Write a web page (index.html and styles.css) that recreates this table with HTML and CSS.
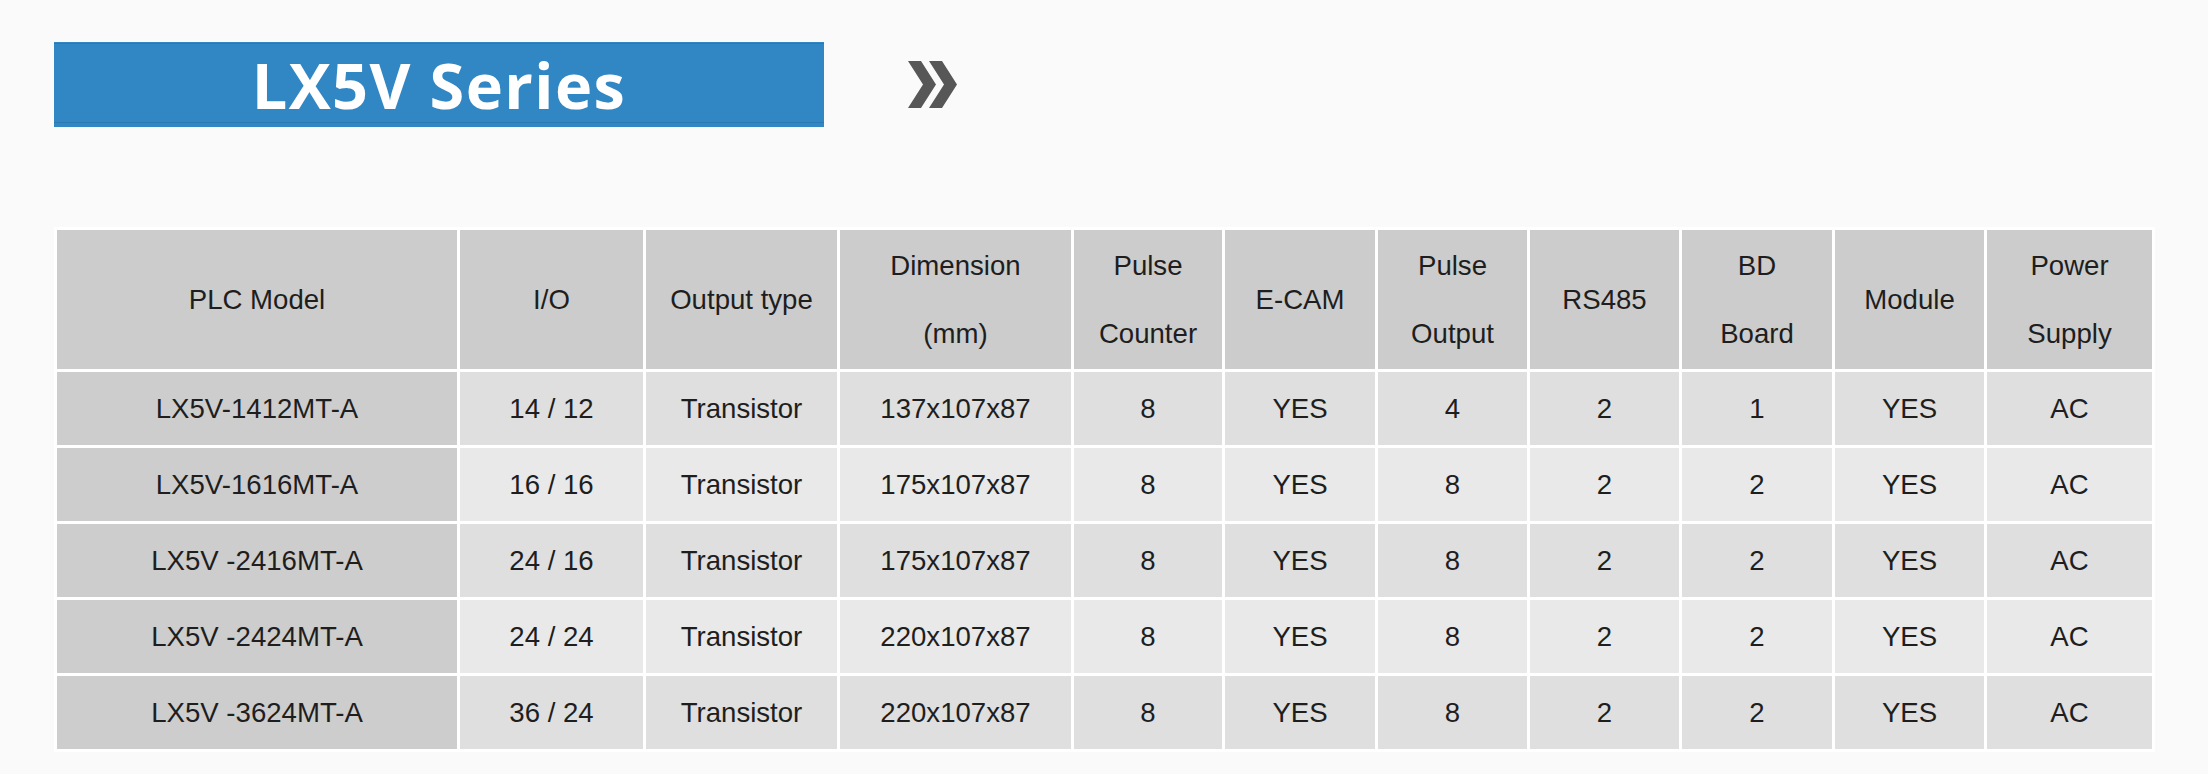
FILE: index.html
```html
<!DOCTYPE html>
<html lang="en">
<head>
<meta charset="utf-8">
<title>LX5V Series</title>
<link rel="stylesheet" href="styles.css">
</head>
<body>
<div class="page">
  <div class="title-row">
    <h1 class="banner">LX5V Series</h1>
    <svg class="chev" viewBox="0 0 49 47" width="49" height="47" aria-hidden="true">
      <polygon points="0,0 13,0 28,23.5 13,47 0,47 15,23.5" />
      <polygon points="21,0 34,0 49,23.5 34,47 21,47 36,23.5" />
    </svg>
  </div>
  <table class="spec">
    <colgroup>
      <col class="c-model"><col class="c-io"><col class="c-out"><col class="c-dim"><col class="c-pc"><col class="c-ecam"><col class="c-po"><col class="c-rs"><col class="c-bd"><col class="c-mod"><col class="c-pow">
    </colgroup>
    <thead>
      <tr>
        <th>PLC Model</th>
        <th>I/O</th>
        <th>Output type</th>
        <th>Dimension<br>(mm)</th>
        <th>Pulse<br>Counter</th>
        <th>E-CAM</th>
        <th>Pulse<br>Output</th>
        <th>RS485</th>
        <th>BD<br>Board</th>
        <th>Module</th>
        <th>Power<br>Supply</th>
      </tr>
    </thead>
    <tbody>
      <tr class="odd">
        <td class="model">LX5V-1412MT-A</td><td>14 / 12</td><td>Transistor</td><td>137x107x87</td><td>8</td><td>YES</td><td>4</td><td>2</td><td>1</td><td>YES</td><td>AC</td>
      </tr>
      <tr class="even">
        <td class="model">LX5V-1616MT-A</td><td>16 / 16</td><td>Transistor</td><td>175x107x87</td><td>8</td><td>YES</td><td>8</td><td>2</td><td>2</td><td>YES</td><td>AC</td>
      </tr>
      <tr class="odd">
        <td class="model">LX5V -2416MT-A</td><td>24 / 16</td><td>Transistor</td><td>175x107x87</td><td>8</td><td>YES</td><td>8</td><td>2</td><td>2</td><td>YES</td><td>AC</td>
      </tr>
      <tr class="even">
        <td class="model">LX5V -2424MT-A</td><td>24 / 24</td><td>Transistor</td><td>220x107x87</td><td>8</td><td>YES</td><td>8</td><td>2</td><td>2</td><td>YES</td><td>AC</td>
      </tr>
      <tr class="odd">
        <td class="model">LX5V -3624MT-A</td><td>36 / 24</td><td>Transistor</td><td>220x107x87</td><td>8</td><td>YES</td><td>8</td><td>2</td><td>2</td><td>YES</td><td>AC</td>
      </tr>
    </tbody>
  </table>
</div>
</body>
</html>
```
FILE: styles.css
```css
html, body {
  margin: 0;
  padding: 0;
  background: #fafafa;
}

.page {
  padding: 42px 0 0 54px;
}

.title-row {
  display: flex;
  align-items: flex-start;
}

.banner {
  margin: 0;
  width: 770px;
  height: 85px;
  line-height: 85px;
  text-align: center;
  color: #ffffff;
  font-family: "Open Sans", "Noto Sans", sans-serif;
  font-weight: 700;
  font-size: 63px;
  letter-spacing: 1.4px;
  background: linear-gradient(to bottom,
    #3186c4 0, #3186c4 1px,
    #2c79b2 1px, #2c79b2 2px,
    #3186c4 2px, #3186c4 80px,
    #2c79b2 80px, #2c79b2 81px,
    #3186c4 81px, #3186c4 100%);
}

.chev {
  display: block;
  margin: 19px 0 0 84px;
  fill: #575757;
}

.spec {
  margin-top: 100px;
  table-layout: fixed;
  width: 2101px;
  border-collapse: separate;
  border-spacing: 3px;
  background: #ffffff;
  font-family: "Liberation Sans", Arial, sans-serif;
  font-size: 27.6px;
  color: #1e1e1e;
}

.c-model { width: 400px; }
.c-io { width: 183px; }
.c-out { width: 191px; }
.c-dim { width: 231px; }
.c-pc { width: 148px; }
.c-ecam { width: 150px; }
.c-po { width: 149px; }
.c-rs { width: 149px; }
.c-bd { width: 150px; }
.c-mod { width: 149px; }
.c-pow { width: 165px; }

.spec th,
.spec td {
  padding: 0;
  text-align: center;
  vertical-align: middle;
  white-space: nowrap;
}

.spec th {
  height: 139px;
  font-weight: 400;
  line-height: 67.5px;
  background: #cccccc;
}

.spec td {
  height: 73px;
  line-height: 32px;
}

.spec tr.odd td {
  background: #dfdfdf;
}

.spec tr.even td {
  background: #e9e9e9;
}

.spec tr td.model {
  background: #cdcdcd;
}
```
